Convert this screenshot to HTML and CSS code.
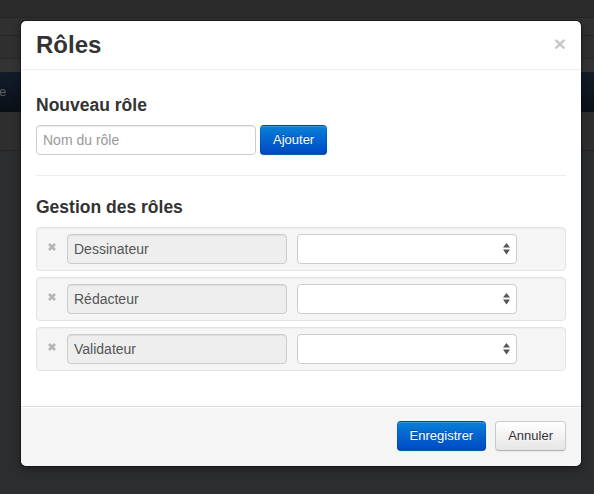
FILE: index.html
```html
<!DOCTYPE html>
<html lang="fr">
<head>
<meta charset="utf-8">
<title>Rôles</title>
<link rel="stylesheet" href="styles.css">
</head>
<body>
<div class="page">
  <div class="band band-top"></div>
  <div class="band band-2"></div>
  <div class="band band-3"></div>
  <div class="band band-4"></div>
  <div class="band band-nav"><span class="nav-text">e</span></div>
  <div class="band band-5"></div>
  <div class="band band-6"></div>
</div>

<div class="modal">
  <div class="modal-header">
    <h3 class="modal-title">Rôles</h3>
    <span class="close">×</span>
  </div>
  <div class="modal-body">
    <h4 class="section-title">Nouveau rôle</h4>
    <div class="add-form">
      <input class="text-input" type="text" placeholder="Nom du rôle">
      <button class="btn btn-primary" type="button">Ajouter</button>
    </div>
    <hr class="divider">
    <h4 class="section-title">Gestion des rôles</h4>
    <div class="role-list">
      <div class="role-row">
        <span class="remove"><svg width="8" height="8" viewBox="0 0 8 8"><path d="M1 1L7 7M7 1L1 7" stroke="#b5b5b5" stroke-width="2.6"/></svg></span>
        <input class="text-input readonly" type="text" value="Dessinateur" readonly>
        <div class="select"><svg width="7" height="12" viewBox="0 0 7 12"><path d="M0 4.5L3.5 0L7 4.5Z M0 6.5H7L3.5 11.5Z" fill="#555"/></svg></div>
      </div>
      <div class="role-row">
        <span class="remove"><svg width="8" height="8" viewBox="0 0 8 8"><path d="M1 1L7 7M7 1L1 7" stroke="#b5b5b5" stroke-width="2.6"/></svg></span>
        <input class="text-input readonly" type="text" value="Rédacteur" readonly>
        <div class="select"><svg width="7" height="12" viewBox="0 0 7 12"><path d="M0 4.5L3.5 0L7 4.5Z M0 6.5H7L3.5 11.5Z" fill="#555"/></svg></div>
      </div>
      <div class="role-row">
        <span class="remove"><svg width="8" height="8" viewBox="0 0 8 8"><path d="M1 1L7 7M7 1L1 7" stroke="#b5b5b5" stroke-width="2.6"/></svg></span>
        <input class="text-input readonly" type="text" value="Validateur" readonly>
        <div class="select"><svg width="7" height="12" viewBox="0 0 7 12"><path d="M0 4.5L3.5 0L7 4.5Z M0 6.5H7L3.5 11.5Z" fill="#555"/></svg></div>
      </div>
    </div>
  </div>
  <div class="modal-footer">
    <button class="btn btn-primary" type="button">Enregistrer</button>
    <button class="btn btn-default" type="button">Annuler</button>
  </div>
</div>
</body>
</html>
```
FILE: styles.css
```css
* { box-sizing: border-box; }

html, body {
  margin: 0;
  padding: 0;
  height: 100%;
}

body {
  background: #2c2d2f;
  font-family: "Liberation Sans", Arial, sans-serif;
  font-size: 14px;
  line-height: 20px;
  color: #333;
  overflow: hidden;
}

.page {
  display: flex;
  flex-direction: column;
  height: 494px;
}

.band { flex: none; }
.band-top { height: 18px; background: #2b2b2b; border-bottom: 1px solid #252525; }
.band-2 { height: 18px; background: #303030; border-bottom: 1px solid #262626; }
.band-3 { height: 23px; background: #2f2f2f; border-bottom: 1px solid #282828; }
.band-4 { height: 13px; background: #333; }
.band-nav {
  height: 40px;
  background: linear-gradient(to bottom, #121c29, #0a1018);
  color: #5d6169;
  font-size: 13px;
  line-height: 40px;
  text-indent: -1px;
}
.band-5 { height: 39px; background: #2e2e2f; border-bottom: 1px solid #232323; }
.band-6 { flex: 1; background: #2c2d2f; }

.modal {
  position: absolute;
  top: 20px;
  left: 20px;
  width: 562px;
  background: #fff;
  border: 1px solid rgba(0, 0, 0, 0.3);
  border-radius: 6px;
  box-shadow: 0 3px 7px rgba(0, 0, 0, 0.3);
  background-clip: padding-box;
}

.modal-header {
  display: flex;
  justify-content: space-between;
  align-items: flex-start;
  padding: 9px 15px;
  border-bottom: 1px solid #eee;
}

.modal-title {
  margin: 0;
  font-size: 24px;
  line-height: 30px;
  font-weight: bold;
  color: #333;
}

.close {
  margin-top: 4px;
  font-size: 21px;
  line-height: 20px;
  font-weight: bold;
  color: #000;
  opacity: 0.22;
  text-shadow: 0 1px 0 #fff;
}

.modal-body {
  padding: 15px;
}

.section-title {
  margin: 10px 0;
  font-size: 17.5px;
  line-height: 20px;
  font-weight: bold;
  color: #333;
}

.add-form {
  display: flex;
  gap: 4px;
}

.text-input {
  width: 220px;
  height: 30px;
  padding: 4px 6px;
  font-family: "Liberation Sans", Arial, sans-serif;
  font-size: 14px;
  line-height: 20px;
  color: #555;
  background: #fff;
  border: 1px solid #ccc;
  border-radius: 4px;
  box-shadow: inset 0 1px 1px rgba(0, 0, 0, 0.075);
  outline: none;
}

.text-input::placeholder { color: #999; }

.text-input.readonly {
  background: #eee;
}

.divider {
  margin: 20px 0;
  border: 0;
  border-top: 1px solid #eee;
  border-bottom: 1px solid #fff;
}

.role-list {
  display: flex;
  flex-direction: column;
  gap: 6px;
  margin-bottom: 20px;
}

.role-row {
  display: flex;
  align-items: flex-start;
  height: 44px;
  padding: 6px 0;
  background: #f5f5f5;
  border: 1px solid #e3e3e3;
  border-radius: 4px;
  box-shadow: inset 0 1px 1px rgba(0, 0, 0, 0.03);
}

.remove {
  width: 30px;
  display: flex;
  justify-content: center;
  padding-top: 9px;
}

.remove svg { display: block; }

.select {
  margin-left: 10px;
  width: 220px;
  height: 30px;
  display: flex;
  align-items: center;
  justify-content: flex-end;
  padding-right: 6px;
  background: #fff;
  border: 1px solid #ccc;
  border-radius: 4px;
}

.select svg { display: block; margin-top: -1px; }

.modal-footer {
  display: flex;
  justify-content: flex-end;
  gap: 9px;
  padding: 14px 15px 15px;
  background: #f5f5f5;
  border-top: 1px solid #ddd;
  border-radius: 0 0 6px 6px;
  box-shadow: inset 0 1px 0 #fff;
}

.btn {
  height: 30px;
  padding: 4px 12px;
  font-family: "Liberation Sans", Arial, sans-serif;
  font-size: 13px;
  line-height: 20px;
  border-radius: 4px;
  border: 1px solid;
  cursor: pointer;
}

.btn-primary {
  color: #fff;
  text-shadow: 0 -1px 0 rgba(0, 0, 0, 0.25);
  background: linear-gradient(to bottom, #0880d8, #0048c4);
  border-color: rgba(0, 0, 0, 0.1) rgba(0, 0, 0, 0.1) rgba(0, 0, 0, 0.25);
  box-shadow: inset 0 1px 0 rgba(255, 255, 255, 0.2), 0 1px 2px rgba(0, 0, 0, 0.05);
}

.btn-default {
  color: #333;
  text-shadow: 0 1px 1px rgba(255, 255, 255, 0.75);
  background: linear-gradient(to bottom, #fff, #e6e6e6);
  border-color: #ccc #ccc #b3b3b3;
  box-shadow: inset 0 1px 0 rgba(255, 255, 255, 0.2), 0 1px 2px rgba(0, 0, 0, 0.05);
}
```
